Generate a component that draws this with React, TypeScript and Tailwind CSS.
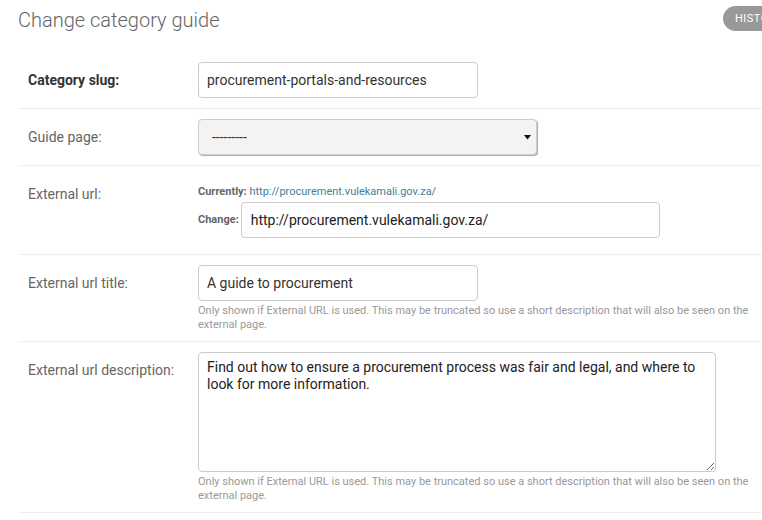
const help =
  "Only shown if External URL is used. This may be truncated so use a short description that will also be seen on the external page.";

function Row({
  label,
  bold,
  children,
  tight,
}: {
  label: string;
  bold?: boolean;
  children: React.ReactNode;
  tight?: boolean;
}) {
  return (
    <div className={`flex px-[10px] pt-[10px] ${tight ? "pb-[9px]" : "pb-[10px]"} border-b border-[#eee]`}>
      <label
        className={`w-[170px] shrink-0 pt-[8px] text-[14px] leading-[20px] ${
          bold ? "font-bold text-[#333]" : "text-[#666]"
        }`}
      >
        {label}
      </label>
      <div className="flex-1 min-w-0">{children}</div>
    </div>
  );
}

function TextInput({ value, width }: { value: string; width: string }) {
  return (
    <input
      readOnly
      value={value}
      className={`${width} h-[36px] rounded-[4px] border border-[#ccc] bg-white px-[8px] text-[14px] text-[#333] outline-none`}
    />
  );
}

function Help() {
  return <p className="mt-[3px] text-[11px] leading-[14px] text-[#999]">{help}</p>;
}

export default function App() {
  return (
    <div className="w-[762px] h-[520px] overflow-hidden bg-white pl-[18px] font-['Roboto',sans-serif]">
      <div className="flex h-[52px] items-start">
        <h1 className="flex-1 pt-[8px] text-[20px] leading-[24px] font-light text-[#666]">
          Change category guide
        </h1>
        <div className="w-[39px] shrink-0 overflow-hidden pt-[5px]">
          <a className="inline-block whitespace-nowrap rounded-[15px] bg-[#999] px-[12px] text-[11px] leading-[25px] font-normal uppercase tracking-[0.5px] text-white">
            History
          </a>
        </div>
      </div>

      <Row label="Category slug:" bold>
        <TextInput value="procurement-portals-and-resources" width="w-[280px]" />
      </Row>

      <Row label="Guide page:">
        <div className="relative flex h-[36px] w-[339px] items-center rounded-[4px] border border-[#ccc] bg-[#f4f3f2] pl-[13px] text-[14px] text-[#333] shadow-[1px_1px_1px_#aaa]">
          ---------
          <svg className="absolute right-[5px] top-[15px]" width="7" height="5" viewBox="0 0 7 5">
            <path d="M0 0h7L3.5 4.5z" fill="#111" />
          </svg>
        </div>
      </Row>

      <Row label="External url:">
        <div className="pb-[6px]">
          <p className="mt-[8px] text-[11px] leading-[16px] text-[#666]">
            <b className="font-bold">Currently:</b>{" "}
            <a className="text-[#447e9b]">http://procurement.vulekamali.gov.za/</a>
          </p>
          <div className="mt-[2px] flex items-center">
            <span className="mr-[2px] text-[11px] font-bold text-[#666]">Change:</span>
            <input
              readOnly
              value="http://procurement.vulekamali.gov.za/"
              className="w-[419px] h-[36px] rounded-[4px] border border-[#ccc] bg-white px-[9px] text-[14px] text-[#222] outline-none"
            />
          </div>
        </div>
      </Row>

      <Row label="External url title:" tight>
        <TextInput value="A guide to procurement" width="w-[280px]" />
        <Help />
      </Row>

      <Row label="External url description:" tight>
        <textarea
          readOnly
          defaultValue="Find out how to ensure a procurement process was fair and legal, and where to look for more information."
          className="block w-[518px] h-[120px] rounded-[4px] border border-[#ccc] bg-white px-[8px] py-[6px] text-[14px] leading-[17px] text-[#222] outline-none"
        />
        <Help />
      </Row>
    </div>
  );
}
